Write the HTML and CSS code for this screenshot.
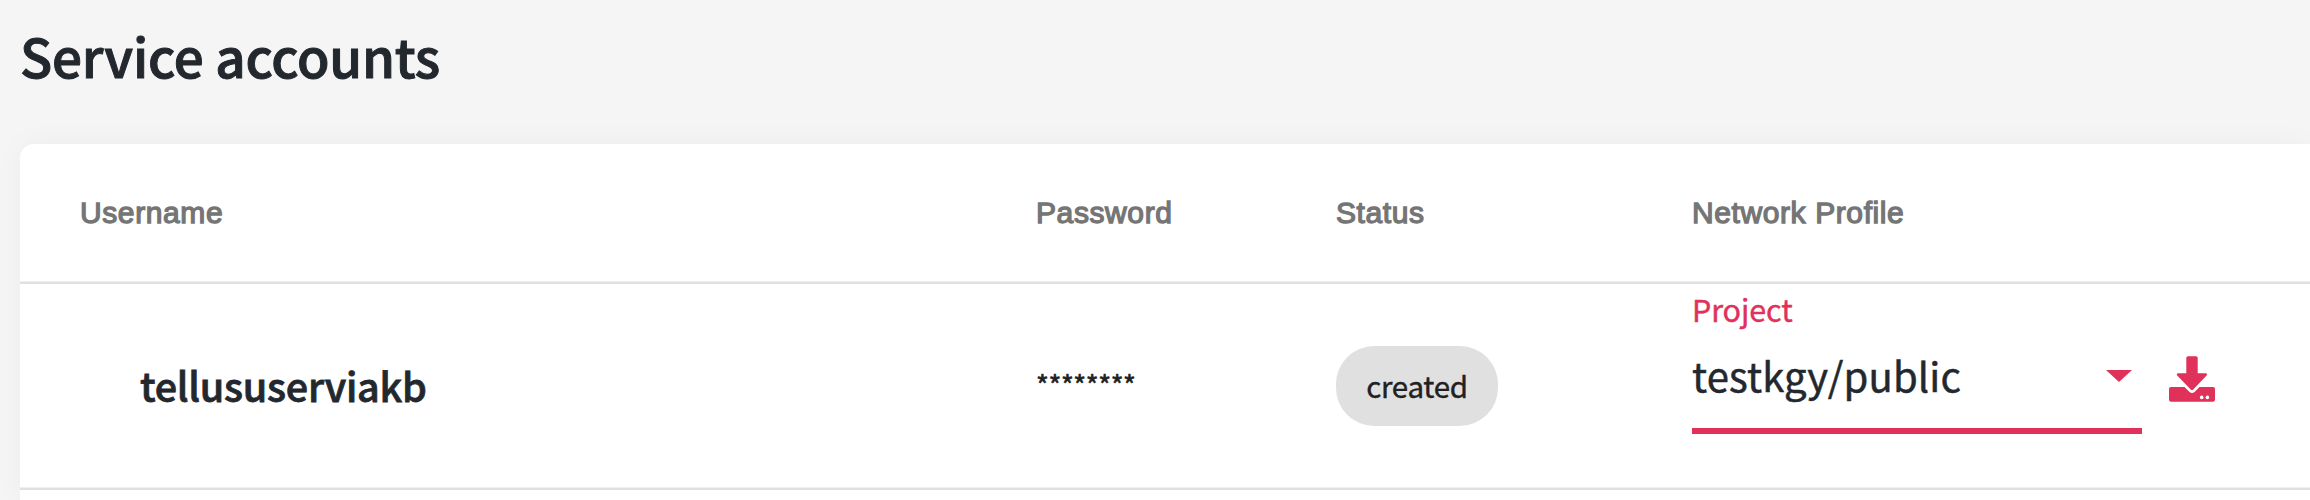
FILE: index.html
```html
<!DOCTYPE html>
<html lang="en">
<head>
    <meta charset="UTF-8">
    <meta name="viewport" content="width=device-width, initial-scale=1.0">
    <title>Service accounts</title>
    <link rel="stylesheet" href="styles.css">
</head>
<body>
    <h1>Service accounts</h1>
    <div class="card">
        <div class="row header-row">
            <div>Username</div>
            <div>Password</div>
            <div>Status</div>
            <div>Network Profile</div>
        </div>
        <div class="row account-row">
            <div class="username">tellususerviakb</div>
            <div class="password">********</div>
            <div><span class="chip">created</span></div>
            <div class="network">
                <div class="select">
                    <label class="select-label">Project</label>
                    <div class="select-value">
                        <span>testkgy/public</span>
                        <svg class="caret" width="26" height="12" viewBox="0 0 26 12"><path d="M0 0h26L13 12z"/></svg>
                    </div>
                </div>
                <svg class="download" width="46" height="46" viewBox="0 0 46 46">
                    <path d="M2 31H15.5L20.5 36Q23 38 25.5 36L30.5 31H44Q46 31 46 33V43.8Q46 45.8 44 45.8H2Q0 45.8 0 43.8V33Q0 31 2 31z"/>
                    <path d="M19 .3H27Q28.7 .3 28.7 2V17.3H36.8Q38.8 17.5 37.6 19.6L24 33.8Q23 34.7 22 33.8L8.2 19.6Q7 17.5 9.2 17.3H17.3V2Q17.3 .3 19 .3z"/>
                    <circle class="dot" cx="32.7" cy="41.4" r="1.8"/>
                    <circle class="dot" cx="38.4" cy="41.4" r="1.8"/>
                </svg>
            </div>
        </div>
    </div>
</body>
</html>
```

FILE: styles.css
```css
body {
    background-color: #f5f5f5;
    color: #23282f;
    font-family: "Noto Sans CJK SC", sans-serif;
    margin: 0;
    height: 500px;
    overflow: hidden;
}
h1 {
    margin: 0;
    padding: 17px 0 0 20px;
    height: 127px;
    line-height: 77px;
    font-size: 53px;
    font-weight: 500;
    letter-spacing: -0.25px;
    -webkit-text-stroke: 1px #23282f;
}
.card {
    background-color: #fff;
    margin-left: 20px;
    height: 356px;
    border-radius: 14px 0 0 0;
    box-shadow: 0 0 30px rgba(0, 0, 0, 0.04);
}
.row {
    display: grid;
    grid-template-columns: 956px 300px 356px 1fr;
    align-items: center;
    box-sizing: border-box;
    padding-left: 60px;
    border-bottom: 2px solid #e0e0e0;
    box-shadow: inset 0 -1px 0 #efefef;
}
.header-row {
    height: 140px;
    font-family: "Liberation Sans", sans-serif;
    font-size: 30px;
    letter-spacing: 0.6px;
    color: #757575;
    -webkit-text-stroke: 1.3px #757575;
}
.account-row {
    height: 206px;
}
.username {
    padding-left: 60px;
    margin-top: -4px;
    font-size: 39.5px;
    font-weight: 500;
    letter-spacing: -0.25px;
    -webkit-text-stroke: 0.8px #23282f;
}
.password {
    margin-top: -5px;
    font-size: 27.5px;
    letter-spacing: -0.4px;
    color: #212121;
    -webkit-text-stroke: 0.6px #212121;
}
.chip {
    display: inline-block;
    box-sizing: border-box;
    width: 162px;
    height: 80px;
    line-height: 78px;
    text-align: center;
    border-radius: 38px;
    background-color: #e0e0e0;
    color: #212121;
    font-size: 29.5px;
    letter-spacing: -0.3px;
    vertical-align: middle;
    -webkit-text-stroke: 0.4px #212121;
}
.network {
    display: flex;
    align-items: flex-start;
    align-self: start;
    gap: 27px;
}
.select {
    width: 450px;
    height: 150px;
    box-sizing: border-box;
    border-bottom: 6px solid #e0315b;
}
.select-label {
    display: block;
    height: 54px;
    line-height: 50px;
    font-size: 30.5px;
    letter-spacing: -0.1px;
    color: #e0315b;
    -webkit-text-stroke: 0.4px #e0315b;
}
.select-value {
    display: flex;
    align-items: center;
    justify-content: space-between;
    height: 76px;
    line-height: 70px;
    padding-right: 10px;
    font-size: 40px;
    letter-spacing: 0.15px;
    -webkit-text-stroke: 0.5px #23282f;
}
.select-value span {
    padding-bottom: 2px;
}
.caret,
.download {
    fill: #e0315b;
    -webkit-text-stroke: 0;
}
.download {
    margin-top: 72px;
}
.dot {
    fill: #fff;
}
```
